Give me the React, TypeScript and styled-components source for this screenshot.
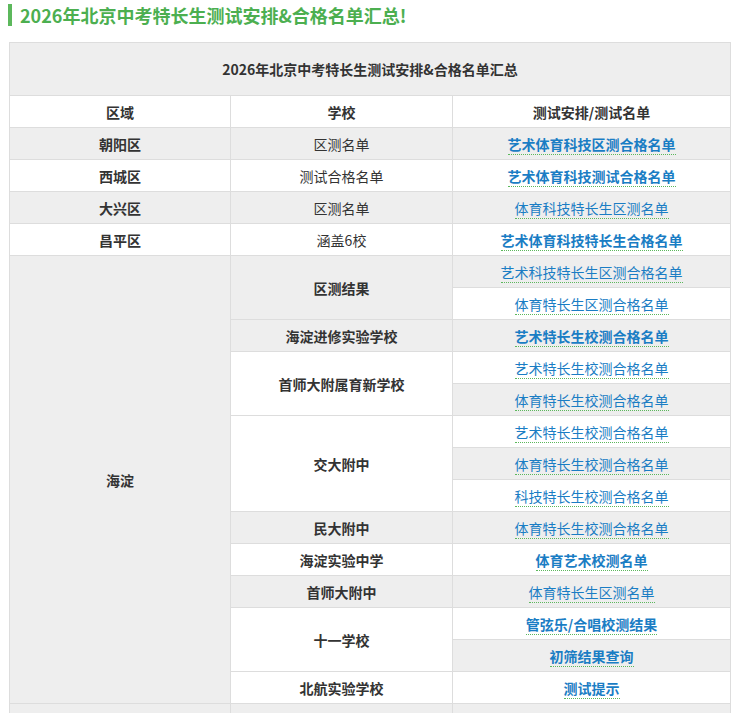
import React from "react";
import styled, { createGlobalStyle } from "styled-components";

const Global = createGlobalStyle`
  body { margin: 0; background: #fff; font-family: "Noto Sans CJK SC", "Noto Sans", sans-serif; }
`;
const Page = styled.div`padding: 4px 5px 0 8px;`;
const Title = styled.h2`
  margin: 0 0 16px 0; padding-left: 8px; border-left: 4px solid #5cb85c;
  color: #4caf50; font-size: 18px; font-weight: 700; line-height: 22px;
`;
const Table = styled.table`
  width: 722px; margin-left: 1px; border-collapse: collapse; table-layout: fixed;
  font-size: 14px; color: #333;
  tbody tr:nth-child(odd) td.s { background: #eeeeee; }
  tbody tr:nth-child(even) td.s { background: #fff; }
`;
const Td = styled.td<{ $b?: boolean; $h?: number }>`
  border: 1px solid #dddddd; text-align: center; vertical-align: middle;
  height: ${(p) => p.$h ?? 31}px; padding: 0; font-weight: ${(p) => (p.$b ? 700 : 400)};
`;
const Cap = styled.td`
  border: 1px solid #dddddd; background: #eeeeee; height: 52px; padding: 0; text-align: center; font-weight: 700; font-size: 14px;
`;
const A = styled.a<{ $b?: boolean }>`
  color: #1a7dc4; text-decoration: none; border-bottom: 1px dotted #5cb85c;
  font-weight: ${(p) => (p.$b ? 700 : 400)};
`;

type R = { region?: [string, number]; school?: [string, boolean, number]; link: [string, boolean] };
const rows: R[] = [
  { region: ["朝阳区", 1], school: ["区测名单", false, 1], link: ["艺术体育科技区测合格名单", true] },
  { region: ["西城区", 1], school: ["测试合格名单", false, 1], link: ["艺术体育科技测试合格名单", true] },
  { region: ["大兴区", 1], school: ["区测名单", false, 1], link: ["体育科技特长生区测名单", false] },
  { region: ["昌平区", 1], school: ["涵盖6校", false, 1], link: ["艺术体育科技特长生合格名单", true] },
  { region: ["海淀", 14], school: ["区测结果", true, 2], link: ["艺术科技特长生区测合格名单", false] },
  { link: ["体育特长生区测合格名单", false] },
  { school: ["海淀进修实验学校", true, 1], link: ["艺术特长生校测合格名单", true] },
  { school: ["首师大附属育新学校", true, 2], link: ["艺术特长生校测合格名单", false] },
  { link: ["体育特长生校测合格名单", false] },
  { school: ["交大附中", true, 3], link: ["艺术特长生校测合格名单", false] },
  { link: ["体育特长生校测合格名单", false] },
  { link: ["科技特长生校测合格名单", false] },
  { school: ["民大附中", true, 1], link: ["体育特长生校测合格名单", false] },
  { school: ["海淀实验中学", true, 1], link: ["体育艺术校测名单", true] },
  { school: ["首师大附中", true, 1], link: ["体育特长生区测名单", false] },
  { school: ["十一学校", true, 2], link: ["管弦乐/合唱校测结果", true] },
  { link: ["初筛结果查询", true] },
  { school: ["北航实验学校", true, 1], link: ["测试提示", true] },
];

export default function App() {
  return (
    <Page>
      <Global />
      <Title>2026年北京中考特长生测试安排&amp;合格名单汇总!</Title>
      <Table>
        <colgroup><col style={{ width: 221 }} /><col style={{ width: 222 }} /><col /></colgroup>
        <thead>
          <tr><Cap colSpan={3}>2026年北京中考特长生测试安排&amp;合格名单汇总</Cap></tr>
          <tr><Td $b>区域</Td><Td $b>学校</Td><Td $b>测试安排/测试名单</Td></tr>
        </thead>
        <tbody>
          {rows.map((r, i) => (
            <tr key={i}>
              {r.region && <Td className="s" $b rowSpan={r.region[1]}>{r.region[0]}</Td>}
              {r.school && <Td className="s" $b={r.school[1]} rowSpan={r.school[2]}>{r.school[0]}</Td>}
              <Td className="s"><A href="#" $b={r.link[1]}>{r.link[0]}</A></Td>
            </tr>
          ))}
          <tr><Td className="s" /><Td className="s" /><Td className="s" /></tr>
        </tbody>
      </Table>
    </Page>
  );
}
